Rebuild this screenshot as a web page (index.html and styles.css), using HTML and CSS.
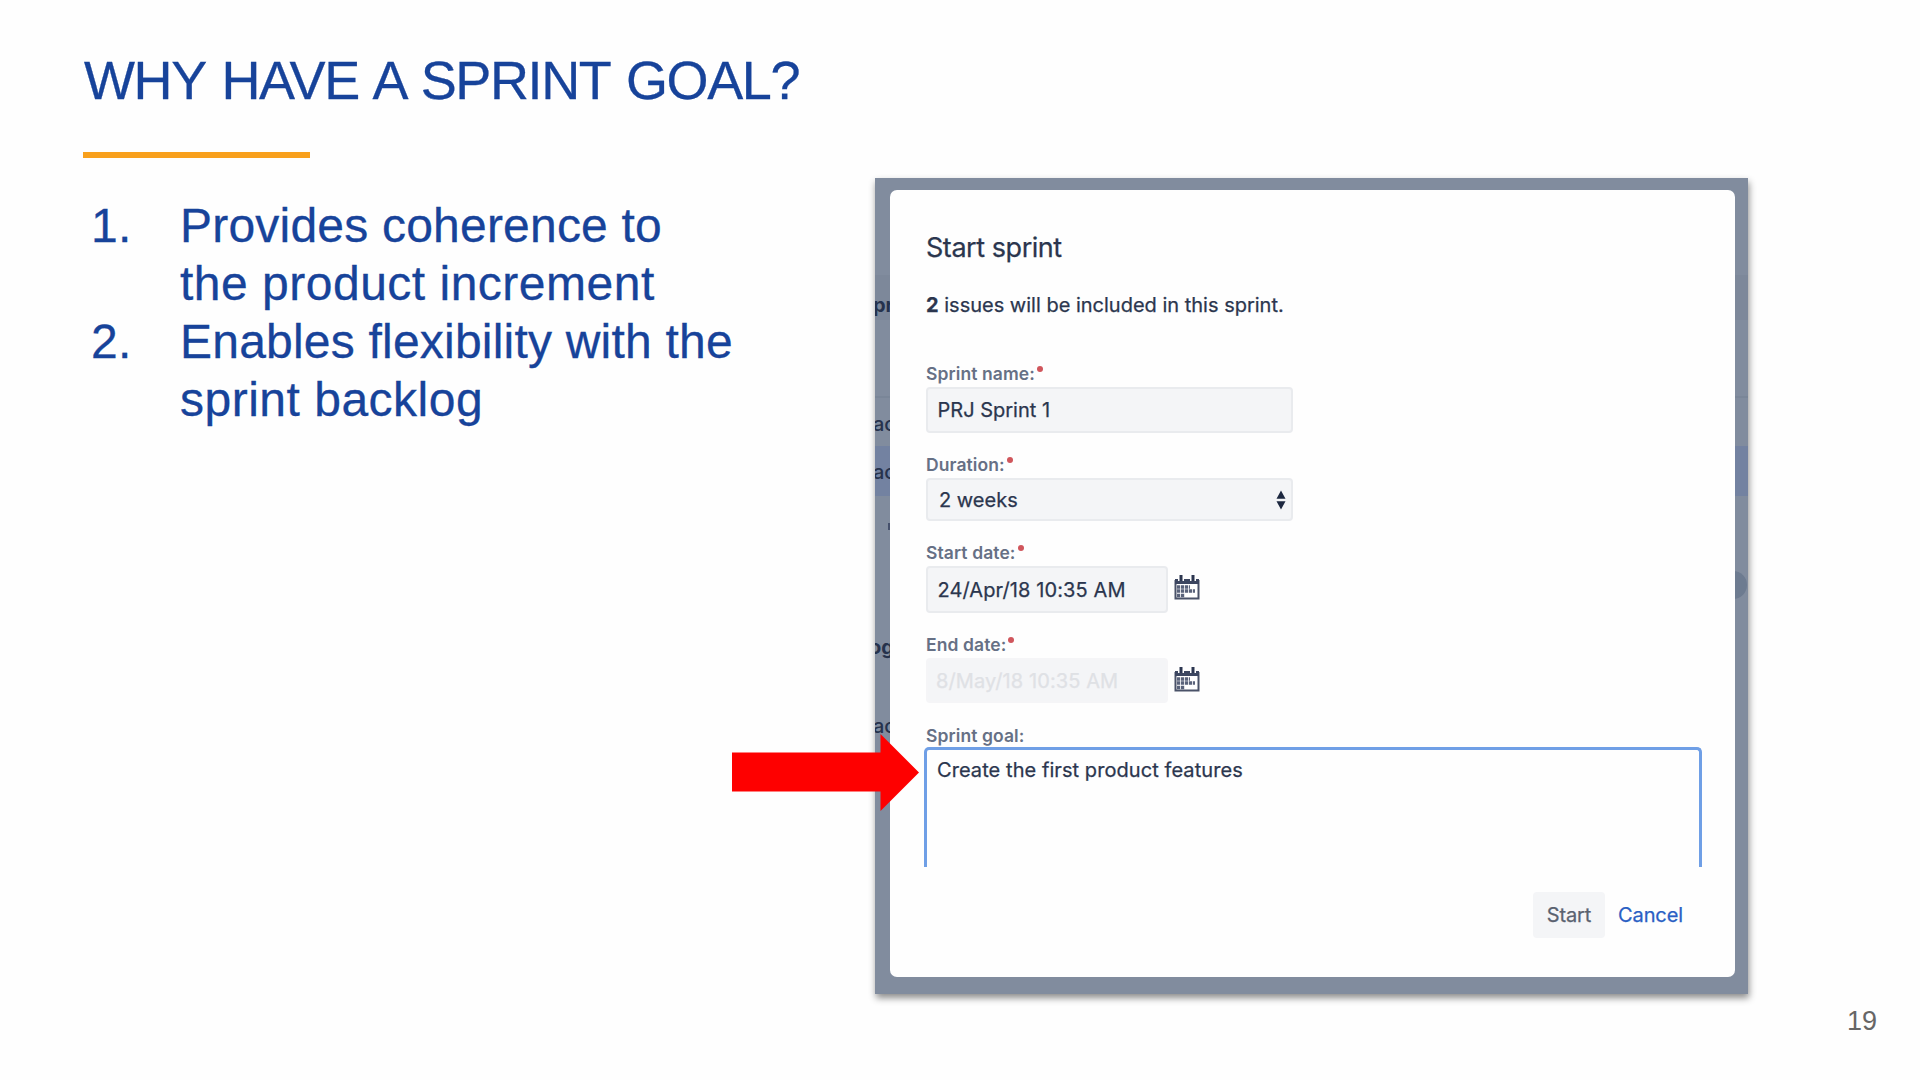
FILE: index.html
```
<!DOCTYPE html>
<html lang="en">
<head>
<meta charset="utf-8">
<title>Why have a sprint goal?</title>
<link rel="stylesheet" href="styles.css">
</head>
<body>
<main class="slide">
  <section class="points">
    <h1 class="slide-title">WHY HAVE A SPRINT GOAL?</h1>
    <div class="rule"></div>
    <ol class="list">
      <li><b class="num">1.</b><p>Provides coherence to<br><span class="loose">the product increment</span></p></li>
      <li><b class="num">2.</b><p>Enables flexibility with the<br><span class="loose">sprint backlog</span></p></li>
    </ol>
  </section>

  <section class="capture">
    <div class="backdrop">
      <i class="band heading-band"></i>
      <i class="band divider"></i>
      <i class="band selected"></i>
      <i class="avatar"></i>
      <span class="peek strong at-sprint">pr</span>
      <span class="peek at-issue-1">ac</span>
      <span class="peek at-issue-2">ac</span>
      <i class="dot"></i>
      <span class="peek strong at-backlog">og</span>
      <span class="peek at-issue-3">ac</span>
    </div>
    <div class="modal">
      <h2 class="modal-title">Start sprint</h2>
      <p class="summary"><b>2</b> issues will be included in this sprint.</p>
      <div class="field">
        <div class="label"><span>Sprint name:</span><i class="req"></i></div>
        <div class="input wide"><span>PRJ Sprint 1</span></div>
      </div>
      <div class="field">
        <div class="label"><span>Duration:</span><i class="req"></i></div>
        <div class="input wide select"><span>2 weeks</span>
          <svg class="updown" width="10" height="20" viewBox="0 0 10 20"><path d="M5 .5l4.500 8.300h-9zM5 19.500l4.500-8.300h-9z" fill="#1d2840"/></svg>
        </div>
      </div>
      <div class="field">
        <div class="label"><span>Start date:</span><i class="req"></i></div>
        <div class="date-row">
          <div class="input date"><span>24/Apr/18 10:35 AM</span></div>
          <svg class="calendar" width="26" height="26" viewBox="0 0 26 26"><use href="#cal"/></svg>
        </div>
      </div>
      <div class="field">
        <div class="label"><span>End date:</span><i class="req"></i></div>
        <div class="date-row">
          <div class="input date disabled"><span>8/May/18 10:35 AM</span></div>
          <svg class="calendar" width="26" height="26" viewBox="0 0 26 26"><use href="#cal"/></svg>
        </div>
      </div>
      <div class="field goal">
        <div class="label"><span>Sprint goal:</span></div>
        <div class="textarea">Create the first product features</div>
      </div>
      <div class="actions">
        <div class="button">Start</div>
        <a class="cancel">Cancel</a>
      </div>
    </div>
    <svg class="arrow" width="188" height="78" viewBox="0 0 188 78"><path d="M0 19.5h148.5V1L187 39.5 148.5 78V58.5H0z" fill="#fe0000"/></svg>
  </section>
  <footer class="page-number">19</footer>
</main>
<svg class="defs" width="0" height="0">
  <symbol id="cal" viewBox="0 0 26 26">
    <path d="M1.500 5v18.500h23V5" fill="#fff" stroke="#4a5268" stroke-width="2"/>
    <path d="M1 4h24v5H1z" fill="#3c4660"/>
    <path d="M7 0v6M19 0v6" stroke="#fff" stroke-width="6"/>
    <path d="M7 0v6M19 0v6" stroke="#2c3650" stroke-width="3"/>
    <path d="M3 12h13M3 16h18M3 20.500h8" stroke="#59627a" stroke-width="3.400" stroke-dasharray="3.200 .8"/>
  </symbol>
</svg>
</body>
</html>
```
FILE: styles.css
```
* { box-sizing: border-box; margin: 0; padding: 0; }
body { background: #fefefe; font-family: "Liberation Sans", Arial, sans-serif; overflow: hidden; }
.slide { position: relative; width: 1920px; height: 1080px; display: flex; }
.points { width: 875px; padding: 46px 0 0 83px; color: #17439a; }
.slide-title { padding-left: 1px; font-size: 54px; line-height: 68px; font-weight: 400; letter-spacing: -1.4px; word-spacing: 3px; white-space: nowrap; -webkit-text-stroke: .3px; }
.rule { width: 227px; height: 6px; margin-top: 38px; background: #f8a01c; }
.list { list-style: none; margin-top: 39px; font-size: 48px; line-height: 58px; letter-spacing: .21px; -webkit-text-stroke: .3px; }
.list li { display: flex; white-space: nowrap; }
.loose { letter-spacing: .5px; }
.num { width: 97px; padding-left: 8px; font-weight: 400; flex: none; }

.capture { position: relative; width: 873px; height: 816px; margin-top: 178px; padding: 12px 13px 17px 15px; background: #818c9e; box-shadow: 1px 4px 7px rgba(0, 0, 0, .45); font-family: Inter, sans-serif; }
.backdrop { position: absolute; inset: 0; overflow: hidden; color: #26324c; }
.band { position: absolute; left: 0; right: 0; }
.heading-band { top: 97px; height: 45px; background: #7d889a; }
.divider { top: 218px; height: 2px; background: #7a8698; }
.selected { top: 268px; height: 50px; background: #7382a1; }
.avatar { position: absolute; right: 1px; top: 393px; width: 28px; height: 28px; border-radius: 50%; background: #6d7b90; }
.dot { position: absolute; left: 13px; top: 345px; width: 4px; height: 7px; background: #45506c; }
.peek { position: absolute; left: -2px; font-size: 20px; line-height: 24px; font-weight: 500; }
.strong { font-weight: 700; }
.at-sprint { top: 115px; }
.at-issue-1 { top: 234px; }
.at-issue-2 { top: 282px; }
.at-backlog { top: 457px; left: -6px; }
.at-issue-3 { top: 536px; }

.modal { position: relative; height: 787px; padding: 40px 34px 0 36px; border-radius: 7px; background: #fefefe; color: #2b364e; -webkit-text-stroke: .25px; }
.modal-title { font-size: 27px; line-height: 36px; font-weight: 400; letter-spacing: -.45px; }
.summary { margin-top: 26px; font-size: 20px; line-height: 26px; }
.summary + .field { margin-top: 45px; }
.field { margin-top: 21px; white-space: nowrap; }
.goal { margin-top: 22px; }
.label { display: flex; height: 24px; font-size: 17.5px; line-height: 22px; font-weight: 600; letter-spacing: .1px; color: #667085; -webkit-text-stroke: 0; }
.goal .label { height: 22px; }
.req { width: 6px; height: 6px; margin: 3px 0 0 2px; border-radius: 50%; background: #d0565c; }
.input { display: flex; align-items: center; height: 46px; padding-left: 9.5px; border: 2px solid #e9ebee; border-radius: 4px; background: #f4f5f7; font-size: 20px; }
.wide { width: 367px; }
.select { height: 43px; justify-content: space-between; padding: 0 5px 0 11px; }
.date { width: 242px; height: 47px; letter-spacing: .1px; }
.disabled { height: 45px; padding-left: 8px; border-color: #f5f5f7; color: #dfe1e5; }
.date-row { display: flex; }
.calendar { margin: 9px 0 0 6px; }
.textarea { height: 120px; padding: 7px 0 0 10px; border: 3px solid #6f9fe6; border-bottom: 0; border-radius: 5px 5px 0 0; font-size: 20px; line-height: 26px; letter-spacing: .07px; margin: 0 -1px 0 -2px; }
.actions { display: flex; justify-content: flex-end; align-items: center; gap: 13px; margin-top: 25px; padding-right: 18px; font-size: 20px; letter-spacing: -.1px; }
.button { width: 72px; height: 46px; display: flex; align-items: center; justify-content: center; border-radius: 4px; background: #f4f5f7; color: #5a6270; }
.cancel { color: #2a5fc4; }
.arrow { position: absolute; left: -143px; top: 555px; }
.page-number { position: absolute; left: 1847px; top: 1005px; font-size: 27px; line-height: 32px; color: #666; }
.defs { position: absolute; }
```
